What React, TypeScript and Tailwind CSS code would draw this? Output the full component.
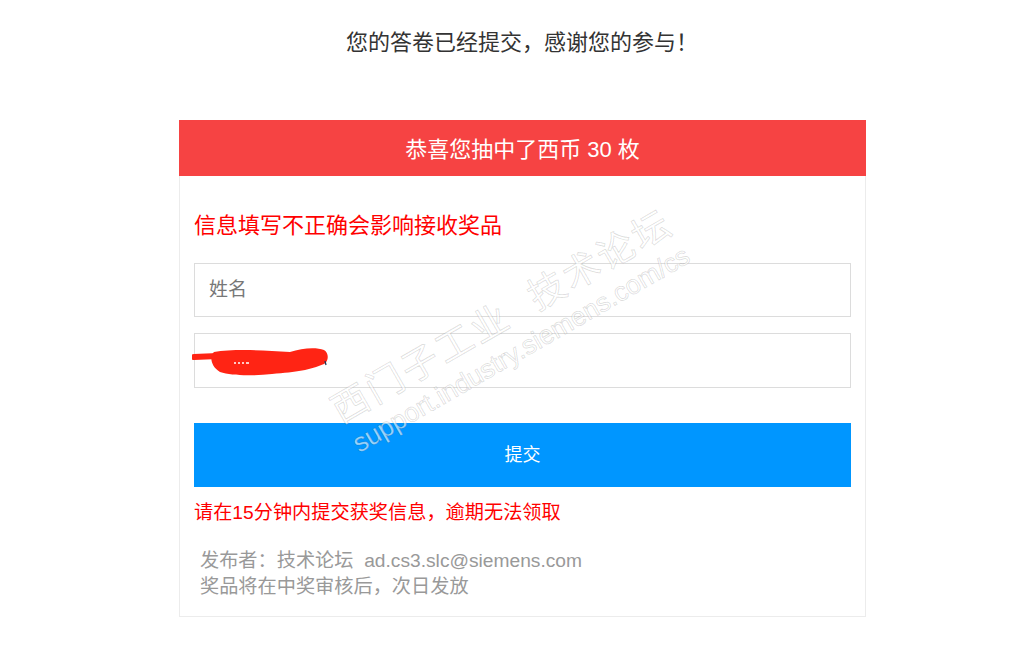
import { useState } from "react";

function Scribble() {
  // 手机号被红笔涂掉的部分
  return (
    <svg
      className="pointer-events-none absolute left-[-2px] top-[14px]"
      width="140"
      height="32"
      viewBox="0 0 140 32"
    >
      <path d="M2 10 L26 9" stroke="#ff2414" strokeWidth="6" strokeLinecap="round" />
      <path
        d="M22 5 C40 2 70 3 98 5 C110 1 124 0 132 3 C137 6 137 14 132 17 C118 23 105 25 80 27 C60 29 40 29 28 25 C19 20 17 9 22 5 Z"
        fill="#ff2414"
      />
      <path d="M42 16 h2 M46 16 h2 M50 16 h2 M54 16 h3" stroke="#ffffff" strokeWidth="1.4" />
      <path d="M133 14 l1 4" stroke="#1d3b5a" strokeWidth="1.3" />
    </svg>
  );
}

function Watermark() {
  return (
    <div className="pointer-events-none absolute left-[332px] top-[212px] -translate-x-1/2 -translate-y-1/2 -rotate-[30deg] flex flex-col items-center whitespace-nowrap select-none">
      <span className="text-[37px] leading-[40px] tracking-[3px] text-white/60 [-webkit-text-stroke:1px_rgba(0,0,0,0.13)]">
        西门子工业&nbsp;&nbsp;技术论坛
      </span>
      <span className="text-[26.5px] leading-[34px] text-white/60 [-webkit-text-stroke:1px_rgba(0,0,0,0.13)]">
        support.industry.siemens.com/cs
      </span>
    </div>
  );
}

export default function App() {
  const [name, setName] = useState("");
  const [phone, setPhone] = useState("");

  return (
    <div className="min-h-[658px] bg-white font-['Liberation_Sans','Noto_Sans_CJK_SC',sans-serif]">
      <h1 className="pt-[30px] pl-[24px] text-center text-[22px] leading-[26px] text-[#333]">
        您的答卷已经提交，感谢您的参与！
      </h1>

      <div className="relative ml-[179px] mt-[64px] w-[687px]">
        <div className="flex h-[56px] items-center justify-center pt-[3px] bg-[#f64343] text-[22px] text-white">
          恭喜您抽中了西币 30 枚
        </div>

        <div className="border-x border-b border-[#ececec] px-[14px] pt-[35px] pb-[16px]">
          <p className="text-[22px] leading-[30px] text-[#ff0000]">信息填写不正确会影响接收奖品</p>

          <form
            className="mt-[22px] flex flex-col"
            onSubmit={(e) => e.preventDefault()}
          >
            <input
              type="text"
              value={name}
              onChange={(e) => setName(e.target.value)}
              placeholder="姓名"
              className="h-[54px] border border-[#dcdcdc] px-[14px] text-[19px] text-[#333] placeholder-[#777] outline-none"
            />
            <div className="relative mt-[16px]">
              <input
                type="text"
                value={phone}
                onChange={(e) => setPhone(e.target.value)}
                className="h-[55px] w-full border border-[#dcdcdc] px-[14px] text-[19px] text-[#333] outline-none"
              />
              {phone === "" && <Scribble />}
            </div>
            <button
              type="submit"
              className="mt-[35px] h-[64px] bg-[#0096ff] text-[18px] text-white"
            >
              提交
            </button>
          </form>

          <p className="mt-[13px] text-[19.2px] leading-[26px] text-[#ff0000]">
            请在15分钟内提交获奖信息，逾期无法领取
          </p>

          <div className="mt-[22px] pl-[6px] text-[19.2px] leading-[26px] text-[#999]">
            <p>发布者：技术论坛&nbsp;&nbsp;ad.cs3.slc@siemens.com</p>
            <p>奖品将在中奖审核后，次日发放</p>
          </div>
        </div>

        <Watermark />
      </div>
    </div>
  );
}
